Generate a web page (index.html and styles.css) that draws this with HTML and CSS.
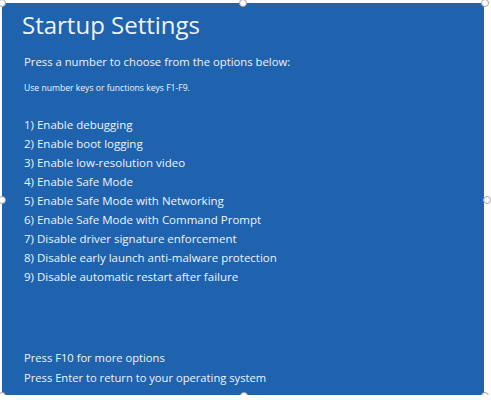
FILE: index.html
```html
<!DOCTYPE html>
<html lang="en">
<head>
<meta charset="utf-8">
<title>Startup Settings</title>
<link rel="stylesheet" href="styles.css">
</head>
<body>
<div class="frame">
  <h1 class="title">Startup Settings</h1>
  <p class="lead">Press a number to choose from the options below:</p>
  <p class="hint">Use number keys or functions keys F1-F9.</p>
  <ol class="options">
    <li>1) Enable debugging</li>
    <li>2) Enable boot logging</li>
    <li>3) Enable low-resolution video</li>
    <li>4) Enable Safe Mode</li>
    <li>5) Enable Safe Mode with Networking</li>
    <li>6) Enable Safe Mode with Command Prompt</li>
    <li>7) Disable driver signature enforcement</li>
    <li>8) Disable early launch anti-malware protection</li>
    <li>9) Disable automatic restart after failure</li>
  </ol>
  <div class="footer">
    <p>Press F10 for more options</p>
    <p>Press Enter to return to your operating system</p>
  </div>
  <span class="handle h-tl"></span>
  <span class="handle h-tm"></span>
  <span class="handle h-tr"></span>
  <span class="handle h-ml"></span>
  <span class="handle h-mr"></span>
  <span class="handle h-bl"></span>
  <span class="handle h-bm"></span>
  <span class="handle h-br"></span>
</div>
</body>
</html>
```
FILE: styles.css
```css
html, body {
  margin: 0;
  padding: 0;
  background: #ffffff;
}

.frame {
  position: relative;
  box-sizing: border-box;
  width: 482px;
  height: 392px;
  margin: 3px 0 0 2px;
  background: #1f63ae;
  color: #eef3fa;
  font-family: "Open Sans", "Noto Sans", sans-serif;
  padding: 8px 10px 7px 20px;
  display: flex;
  flex-direction: column;
}

.frame p, .frame h1, .frame ol {
  margin: 0;
  padding: 0;
}

.title {
  font-weight: 400;
  font-size: 24px;
  line-height: 28px;
  margin: 0;
}

.lead {
  margin-top: 14px !important;
  font-size: 11.3px;
  line-height: 18px;
  padding-left: 2px !important;
}

.hint {
  margin-top: 10px !important;
  font-size: 8.6px;
  line-height: 14px;
  padding-left: 2px !important;
}

.options {
  list-style: none;
  margin-top: 20px !important;
  padding-left: 2px !important;
  font-size: 11.5px;
  line-height: 19px;
}

.footer {
  margin-top: auto;
  padding-left: 2px;
  font-size: 11.2px;
  line-height: 20px;
}

.handle {
  position: absolute;
  width: 8px;
  height: 8px;
  border-radius: 50%;
  background: #ffffff;
  border: 1px solid #a5a5a5;
  box-sizing: border-box;
}

.h-tl { left: -4px; top: -4px; }
.h-tm { left: 237px; top: -4px; }
.h-tr { left: 479px; top: -4px; }
.h-ml { left: -4px; top: 193px; }
.h-mr { left: 481px; top: 193px; }
.h-bl { left: -4px; top: 389px; }
.h-bm { left: 238px; top: 389px; }
.h-br { left: 479px; top: 389px; }
```
